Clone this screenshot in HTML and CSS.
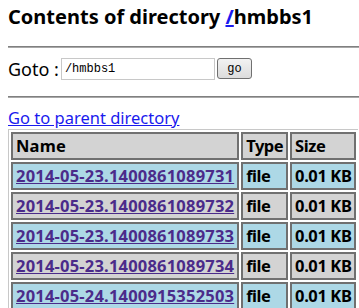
FILE: index.html
```html
<!DOCTYPE html>
<html>
<head>
    <title>Contents of directory /hmbbs1</title>
    <link rel="stylesheet" href="styles.css">
</head>
<body>
    <h1 class="title">Contents of directory <a href="#" class="root">/</a>hmbbs1</h1>
    <hr class="rule">
    <form class="goto">
        <label for="path">Goto :</label>
        <input id="path" type="text" value="/hmbbs1">
        <button type="button">go</button>
    </form>
    <hr class="rule">
    <a href="#" class="parent">Go to parent directory</a>
    <table class="listing">
        <tr class="head">
            <th class="name">Name</th>
            <th class="type">Type</th>
            <th class="size">Size</th>
        </tr>
        <tr class="odd">
            <td class="name"><a href="#">2014-05-23.1400861089731</a></td>
            <td class="type">file</td>
            <td class="size">0.01 KB</td>
        </tr>
        <tr class="even">
            <td class="name"><a href="#">2014-05-23.1400861089732</a></td>
            <td class="type">file</td>
            <td class="size">0.01 KB</td>
        </tr>
        <tr class="odd">
            <td class="name"><a href="#">2014-05-23.1400861089733</a></td>
            <td class="type">file</td>
            <td class="size">0.01 KB</td>
        </tr>
        <tr class="even">
            <td class="name"><a href="#">2014-05-23.1400861089734</a></td>
            <td class="type">file</td>
            <td class="size">0.01 KB</td>
        </tr>
        <tr class="odd">
            <td class="name"><a href="#">2014-05-24.1400915352503</a></td>
            <td class="type">file</td>
            <td class="size">0.01 KB</td>
        </tr>
    </table>
</body>
</html>
```

FILE: styles.css
```css
html {
    overflow: hidden;
}
body {
    font-family: 'Noto Sans', 'Open Sans', sans-serif;
    margin: 0 0 0 8px;
    padding: 0;
    background-color: #fff;
    color: #000;
}
.title {
    font-size: 20px;
    line-height: 24px;
    margin: 5px 0 0;
    font-weight: bold;
}
.root {
    color: #1a1aee;
}
.rule {
    border: 0;
    border-top: 1px solid #808080;
    border-bottom: 1px solid #a8a8a8;
    height: 0;
    margin: 0;
}
.title + .rule {
    margin-top: 17px;
}
.goto {
    display: flex;
    align-items: flex-start;
    height: 38px;
    padding-top: 10px;
    margin: 0;
    font-size: 18px;
}
.goto label {
    margin-right: 2px;
    line-height: 22px;
}
.goto input {
    width: 146px;
    height: 16px;
    padding: 2px 3px;
    margin: 0;
    border: 1px solid #c8c8c8;
    font-family: 'Liberation Mono', monospace;
    font-size: 12px;
    color: #000;
}
.goto button {
    margin: 0 0 0 2px;
    width: 35px;
    height: 21px;
    padding: 0;
    border: 1px solid #707070;
    border-radius: 3px;
    background: linear-gradient(#f2f2f2, #dcdcdc);
    font-family: 'Liberation Mono', monospace;
    font-size: 12px;
}
.parent {
    display: block;
    margin-top: 9px;
    font-size: 16.5px;
    line-height: 22px;
    color: #1a1aee;
    width: max-content;
}
.listing {
    border-collapse: separate;
    border-spacing: 2px;
    border-left: 1px solid #c8c8c8;
    border-top: 1px solid #c8c8c8;
    margin-top: 0;
    font-size: 16.5px;
    font-weight: bold;
}
.listing th,
.listing td {
    border: 2px solid #707070;
    padding: 0 3px;
    line-height: 24px;
    text-align: left;
    white-space: nowrap;
}
.listing .name {
    letter-spacing: 0.2px;
}
.listing .type {
    letter-spacing: -0.5px;
}
.listing .size {
    letter-spacing: -0.4px;
}
.head th,
.even td {
    background: #d3d3d3;
}
.odd td {
    background: #add8e6;
}
.listing a {
    color: #4b2b8a;
}
```
